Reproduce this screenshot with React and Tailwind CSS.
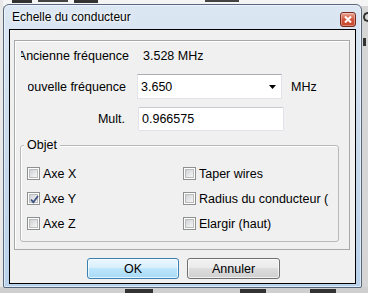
import React from "react";

function Check({ checked }) {
  return (
    <div className="w-[13px] h-[13px] border border-[#8e8f8f] bg-white p-[1px] shrink-0">
      <div className="w-full h-full bg-gradient-to-br from-[#cfd2d6] to-[#f7f7f7] border border-[#bcbcbc] relative">
        {checked && (
          <svg className="absolute left-[-1px] top-[-1px]" width="11" height="11" viewBox="0 0 11 11">
            <path d="M2 5.5 L4.3 8.2 L9 2" fill="none" stroke="#3f5482" strokeWidth="1.8" />
          </svg>
        )}
      </div>
    </div>
  );
}

function CheckRow({ label, checked }) {
  return (
    <div className="flex items-center h-[25px] gap-[3px] whitespace-nowrap overflow-hidden">
      <Check checked={checked} />
      <span className="text-[12.5px] leading-[14px] text-black">{label}</span>
    </div>
  );
}

export default function App() {
  return (
    <div className="w-[368px] h-[293px] relative overflow-hidden bg-[#d6d6d6] font-['Liberation_Sans',Arial,sans-serif]">
      {/* desktop behind */}
      <div className="absolute left-0 top-0 w-[368px] h-[6px] bg-[#f4f4f4]" />
      <div className="absolute left-[12px] top-0 w-[20px] h-[3px] bg-[#333]" />
      <div className="absolute left-[38px] top-0 w-[30px] h-[2px] bg-[#444]" />
      <div className="absolute left-[74px] top-0 w-[24px] h-[3px] bg-[#333]" />
      <div className="absolute left-[205px] top-0 w-[34px] h-[2px] bg-[#444]" />
      <div className="absolute left-0 top-0 w-[3px] h-[293px] bg-[#e8e8e8]" />
      <div className="absolute left-[363px] top-[12px] w-[5px] h-[10px] border-2 border-[#333] rounded-l-full border-r-0" />
      <div className="absolute left-[363px] top-[38px] w-[3px] h-[8px] bg-[#333]" />
      <div className="absolute left-0 top-[287px] w-[368px] h-[6px] bg-[#cfcfcf]" />
      <div className="absolute left-[125px] top-[289px] w-[28px] h-[4px] bg-[#333]" />
      <div className="absolute left-[240px] top-[289px] w-[26px] h-[4px] bg-[#333]" />
      <div className="absolute left-[310px] top-[289px] w-[26px] h-[4px] bg-[#333]" />

      {/* window */}
      <div className="absolute left-[3px] top-[4px] w-[359px] h-[284px] border border-[#58687c] rounded-t-[6px] rounded-b-[2px] bg-gradient-to-b from-[#dce7f3] via-[#c9daec] to-[#b9d2ec] flex flex-col px-[5px] pb-[3px] shadow-[0_0_0_1px_rgba(255,255,255,0.5)_inset]">
        <div className="h-[24px] flex items-start justify-between shrink-0">
          <div className="pl-[3px] pt-[5px] text-[12px] leading-[15px] text-black [text-shadow:0_0_6px_#fff,0_0_3px_#fff]">
            Echelle du conducteur
          </div>
          <div className="mt-[7px] mr-[0px] w-[16px] h-[15px] rounded-[3px] border border-[#7a2a1d] bg-gradient-to-b from-[#e8a896] via-[#d1583f] to-[#c7432a] flex items-center justify-center shadow-[inset_0_0_0_1px_rgba(255,255,255,0.35)]">
            <svg width="8" height="7" viewBox="0 0 8 7">
              <path d="M1 0.5 L7 6.5 M7 0.5 L1 6.5" stroke="#fff" strokeWidth="2" />
            </svg>
          </div>
        </div>

        <div className="flex-1 border border-black bg-[#f0f0f0] pt-[10px] pl-[4px] pr-[5px] flex flex-col">
          {/* panel */}
          <div className="h-[210px] border border-[#a8a8a8] shadow-[inset_1px_1px_0_#fff] flex flex-col">
            {/* row 1 */}
            <div className="mt-[7px] h-[16px] flex items-center">
              <div className="ml-[6px] w-[108px] overflow-hidden flex justify-end whitespace-nowrap text-[12.5px] leading-[16px]">
                Ancienne fréquence
              </div>
              <div className="ml-[14px] text-[12.5px] leading-[16px] whitespace-nowrap">3.528 MHz</div>
            </div>
            {/* row 2 */}
            <div className="mt-[10px] h-[25px] flex items-center">
              <div className="ml-[13px] w-[98px] overflow-hidden flex justify-end whitespace-nowrap text-[12.5px] leading-[16px]">
                Nouvelle fréquence
              </div>
              <div className="ml-[11px] w-[145px] h-[25px] bg-white border border-[#e2e3ea] border-t-[#abadb3] flex items-center justify-between pl-[3px] pr-[5px]">
                <span className="text-[12.5px] leading-[16px]">3.650</span>
                <svg width="7" height="4" viewBox="0 0 7 4">
                  <path d="M0 0 H7 L3.5 4 Z" fill="#000" />
                </svg>
              </div>
              <div className="ml-[9px] text-[12.5px] leading-[16px]">MHz</div>
            </div>
            {/* row 3 */}
            <div className="mt-[8px] h-[24px] flex items-center">
              <div className="ml-[13px] w-[97px] flex justify-end text-[12.5px] leading-[16px]">Mult.</div>
              <div className="ml-[13px] w-[146px] h-[24px] bg-white border border-[#e2e3ea] border-t-[#c8cad0] rounded-[2px] flex items-center pl-[3px]">
                <span className="text-[12.5px] leading-[16px]">0.966575</span>
              </div>
            </div>
            {/* groupbox */}
            <div className="mt-[14px] ml-[5px] w-[319px] h-[97px] border border-[#b9b9b9] rounded-[3px] shadow-[inset_1px_1px_0_#fff] relative">
              <div className="absolute left-[3px] top-[-9px] px-[3px] bg-[#f0f0f0] text-[12.5px] leading-[16px]">Objet</div>
              <div className="mt-[15px] flex">
                <div className="ml-[6px] w-[156px] flex flex-col">
                  <CheckRow label="Axe X" />
                  <CheckRow label="Axe Y" checked />
                  <CheckRow label="Axe Z" />
                </div>
                <div className="w-[151px] flex flex-col">
                  <CheckRow label="Taper wires" />
                  <CheckRow label="Radius du conducteur (" />
                  <CheckRow label="Elargir (haut)" />
                </div>
              </div>
            </div>
          </div>
          {/* buttons */}
          <div className="mt-[8px] flex pl-[73px] gap-[8px]">
            <div className="w-[92px] h-[21px] rounded-[3px] border border-[#3c7fb1] bg-[linear-gradient(to_bottom,#eaf6fd_0%,#d9f0fc_45%,#bee6fd_50%,#a7d9f5_100%)] shadow-[inset_0_0_0_1px_rgba(255,255,255,0.7)] flex items-center justify-center text-[12.5px] leading-[16px]">
              OK
            </div>
            <div className="w-[93px] h-[21px] rounded-[3px] border border-[#707070] bg-[linear-gradient(to_bottom,#f2f2f2_0%,#ebebeb_45%,#dddddd_50%,#cfcfcf_100%)] shadow-[inset_0_0_0_1px_rgba(255,255,255,0.7)] flex items-center justify-center text-[12.5px] leading-[16px]">
              Annuler
            </div>
          </div>
        </div>
      </div>
    </div>
  );
}
